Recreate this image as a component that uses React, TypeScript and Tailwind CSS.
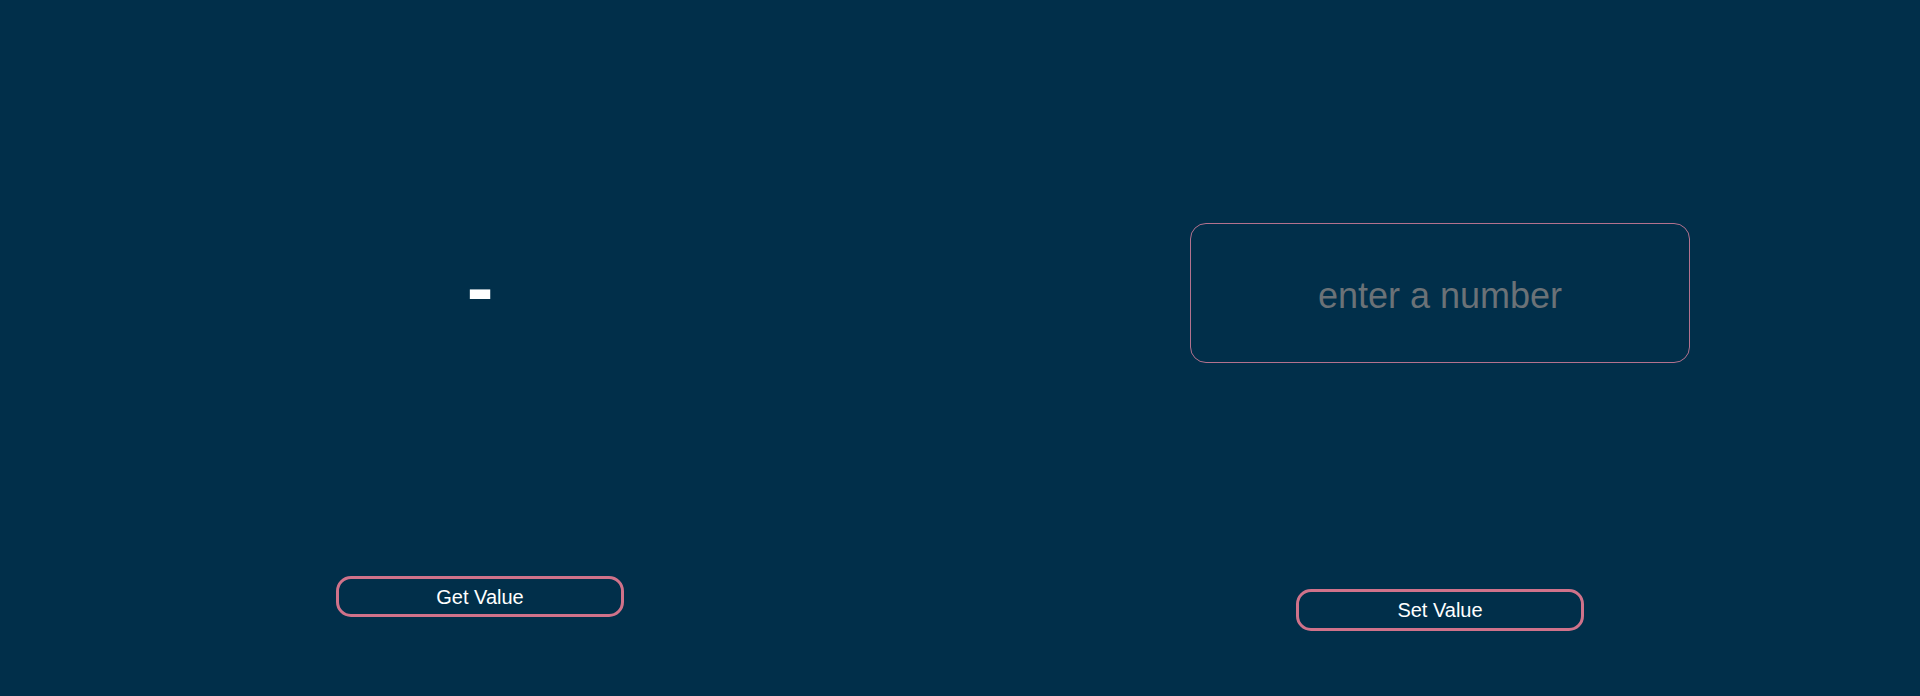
const App = () => {
  return (
    <div className="w-full h-[696px] bg-[#012f4a] grid grid-cols-2 font-['Liberation_Sans',Arial,sans-serif] text-white">
      <div className="flex flex-col items-center pt-[248px]">
        <h1 className="text-[80px] leading-[80px] font-bold h-[80px]">-</h1>
        <button className="mt-[248px] w-[288px] h-[41px] border-[3px] border-[#d0728a] rounded-[15px] text-[20px] text-white">
          Get Value
        </button>
      </div>

      <div className="flex flex-col items-center pt-[223px]">
        <input
          type="text"
          inputMode="numeric"
          placeholder="enter a number"
          className="w-[500px] h-[140px] pt-[5px] bg-transparent border border-[#b3728e] rounded-[16px] text-center text-[36px] text-white placeholder:text-[#6b7277] outline-none"
        />
        <button className="mt-[226px] w-[288px] h-[42px] border-[3px] border-[#d0728a] rounded-[15px] text-[20px] text-white">
          Set Value
        </button>
      </div>
    </div>
  );
};

export default App;
